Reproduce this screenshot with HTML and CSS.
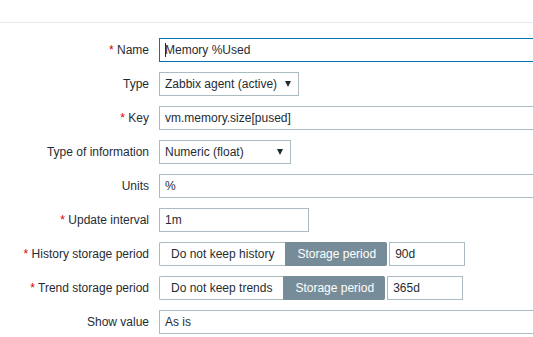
FILE: index.html
```html
<!DOCTYPE html>
<html lang="en">
<head>
  <meta charset="UTF-8">
  <title>Item</title>
  <link rel="stylesheet" href="styles.css">
</head>
<body>
  <div class="tabs"></div>

  <div class="form">
    <label class="label"><span class="req">*</span> Name</label>
    <div class="field wide focus"><span class="caret"></span>Memory %Used</div>

    <label class="label">Type</label>
    <div class="field select type-select">Zabbix agent (active)<span class="arrow"></span></div>

    <label class="label"><span class="req">*</span> Key</label>
    <div class="field wide">vm.memory.size[pused]</div>

    <label class="label">Type of information</label>
    <div class="field select info-select">Numeric (float)<span class="arrow"></span></div>

    <label class="label">Units</label>
    <div class="field wide">%</div>

    <label class="label"><span class="req">*</span> Update interval</label>
    <div class="field small">1m</div>

    <label class="label"><span class="req">*</span> History storage period</label>
    <div class="period">
      <div class="seg">Do not keep history</div>
      <div class="seg on">Storage period</div>
      <div class="field days">90d</div>
    </div>

    <label class="label"><span class="req">*</span> Trend storage period</label>
    <div class="period">
      <div class="seg">Do not keep trends</div>
      <div class="seg on">Storage period</div>
      <div class="field days">365d</div>
    </div>

    <label class="label">Show value</label>
    <div class="field wide">As is</div>
  </div>
</body>
</html>
```

FILE: styles.css
```css
* {
  margin: 0;
  padding: 0;
  box-sizing: border-box;
}

body {
  width: 533px;
  height: 337px;
  overflow: hidden;
  background: #fff;
  color: #1f2c33;
  font-family: Arial, "Liberation Sans", sans-serif;
  font-size: 12px;
}

.tabs {
  height: 23px;
  border-bottom: 1px solid #e6eaec;
}

.form {
  display: grid;
  grid-template-columns: 149px auto;
  column-gap: 10px;
  row-gap: 10px;
  padding-top: 15px;
  justify-content: start;
}

.label {
  height: 24px;
  line-height: 24px;
  text-align: right;
  white-space: nowrap;
}

.req {
  color: #d40000;
}

.field {
  height: 24px;
  line-height: 22px;
  padding: 0 5px;
  border: 1px solid #acbbc2;
  background: #fff;
  white-space: nowrap;
  position: relative;
}

/* long fields run past the right edge, as in the item form */
.wide {
  width: 374px;
  border-right: none;
}

.focus {
  border-color: #0275b8;
}

.caret {
  display: inline-block;
  width: 1px;
  height: 14px;
  background: #1f2c33;
  vertical-align: -3px;
  margin-right: -1px;
}

.select {
  display: flex;
  align-items: center;
  justify-content: space-between;
}

.type-select {
  width: 140px;
}

.info-select {
  width: 132px;
}

.arrow {
  width: 0;
  height: 0;
  border-left: 3.5px solid transparent;
  border-right: 3.5px solid transparent;
  border-top: 6px solid #1f2c33;
  margin-right: 2px;
}

.small {
  width: 150px;
}

.period {
  display: flex;
}

.seg {
  height: 24px;
  line-height: 22px;
  padding: 0 11px;
  border: 1px solid #acbbc2;
  border-right: none;
  border-radius: 2px 0 0 2px;
  background: #fff;
  white-space: nowrap;
}

.seg.on {
  background: #768d99;
  border-color: #768d99;
  color: #fff;
  border-radius: 0 2px 2px 0;
  margin-right: 2px;
}

.days {
  width: 76px;
}
```
